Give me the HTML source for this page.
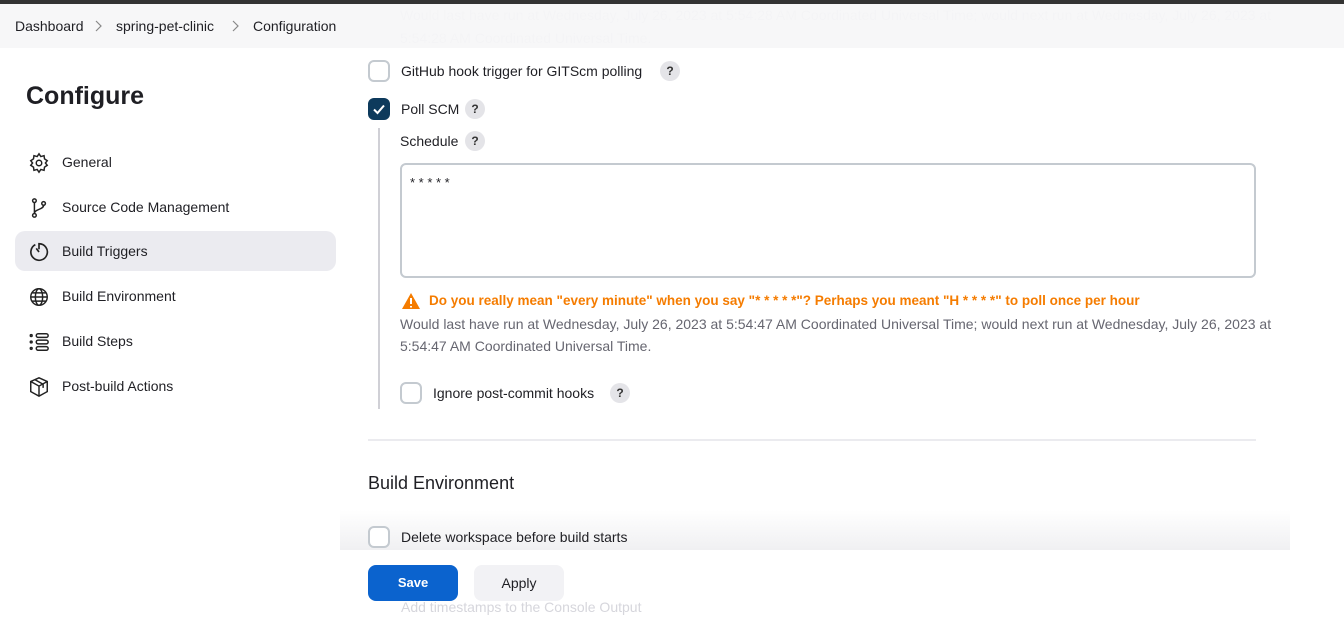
<!DOCTYPE html>
<html><head><meta charset="utf-8"><style>
*{box-sizing:border-box;margin:0;padding:0}
body{width:1344px;height:612px;overflow:hidden;background:#fff;font-family:"Liberation Sans",sans-serif;color:#1f1f24;font-size:14px;position:relative}
.abs{position:absolute}
.topbar{left:0;top:0;width:1344px;height:4px;background:#333}
.crumb{left:0;top:4px;width:1344px;height:44px;background:rgba(246,246,248,0.93);z-index:5}
.crumb span{position:absolute;top:14px;font-size:14px;color:#1f1f24}
.crumb svg{position:absolute;top:16px}
.faded{color:#d6d6dc;font-size:14px;line-height:23px}
.cb{width:22px;height:22px;border:2px solid #c4cad0;border-radius:6px;background:#fff}
.cbon{background:#0d3a5c;border-color:#0d3a5c}
.q{width:20px;height:20px;border-radius:50%;background:#e4e4e8;font-size:12px;font-weight:bold;text-align:center;line-height:20px;color:#333}
.nav{left:15px;width:321px;height:40px;border-radius:10px}
.nav span{position:absolute;left:47px;top:12px;font-size:14px}
.nav svg{position:absolute;left:13px;top:10px}
</style></head><body>
<div class="abs topbar"></div>
<div class="abs faded" style="left:400px;top:4px">Would last have run at Wednesday, July 26, 2023 at 5:54:28 AM Coordinated Universal Time; would next run at Wednesday, July 26, 2023 at<br>5:54:28 AM Coordinated Universal Time.</div>
<div class="abs crumb">
<span style="left:15px">Dashboard</span><svg style="left:94px" width="8" height="12" viewBox="0 0 8 12"><path d="M2 1l5 5-5 5" stroke="#888" stroke-width="1.2" fill="none"/></svg>
<span style="left:116px">spring-pet-clinic</span><svg style="left:231px" width="8" height="12" viewBox="0 0 8 12"><path d="M2 1l5 5-5 5" stroke="#888" stroke-width="1.2" fill="none"/></svg>
<span style="left:253px">Configuration</span>
</div>

<div class="abs" style="left:26px;top:82px;font-size:25px;font-weight:bold">Configure</div>

<div class="abs nav" style="top:142px"><svg width="22" height="22" viewBox="0 0 24 24" fill="none" stroke="#222" stroke-width="1.6"><circle cx="12" cy="12" r="3"/><path d="M12 2l2 3 3.5-1 .5 3.5 3 2-2 2.5 2 2.5-3 2-.5 3.5-3.5-1-2 3-2-3-3.5 1-.5-3.5-3-2 2-2.5-2-2.5 3-2 .5-3.5 3.5 1z"/></svg><span>General</span></div>
<div class="abs nav" style="top:187px"><svg width="22" height="22" viewBox="0 0 24 24" fill="none" stroke="#222" stroke-width="1.6"><circle cx="7" cy="4" r="2"/><circle cx="7" cy="20" r="2"/><circle cx="17" cy="7" r="2"/><path d="M7 6v12M17 9c0 5-10 4-10 9"/></svg><span>Source Code Management</span></div>
<div class="abs nav" style="top:231px;background:#ebebf0"><svg width="22" height="22" viewBox="0 0 24 24" fill="none" stroke="#222" stroke-width="1.8"><path d="M8 4a9 9 0 1 0 4-1v6"/><path d="M12 12l-3-4"/></svg><span>Build Triggers</span></div>
<div class="abs nav" style="top:276px"><svg width="22" height="22" viewBox="0 0 24 24" fill="none" stroke="#222" stroke-width="1.6"><circle cx="12" cy="12" r="9"/><ellipse cx="12" cy="12" rx="4" ry="9"/><path d="M3 12h18M4.5 7.5h15M4.5 16.5h15"/></svg><span>Build Environment</span></div>
<div class="abs nav" style="top:321px"><svg width="22" height="22" viewBox="0 0 24 24" fill="none" stroke="#222" stroke-width="1.6"><rect x="9" y="3" width="13" height="4" rx="2"/><rect x="9" y="10" width="13" height="4" rx="2"/><rect x="9" y="17" width="13" height="4" rx="2"/><circle cx="3.5" cy="5" r="1"/><circle cx="3.5" cy="12" r="1"/><circle cx="3.5" cy="19" r="1"/></svg><span>Build Steps</span></div>
<div class="abs nav" style="top:366px"><svg width="22" height="22" viewBox="0 0 24 24" fill="none" stroke="#222" stroke-width="1.6"><path d="M12 2l9 4v11l-9 5-9-5V6z"/><path d="M3 6l9 5 9-5M12 11v11M7.5 4l9 5v4"/></svg><span>Post-build Actions</span></div>

<div class="abs cb" style="left:368px;top:60px"></div>
<div class="abs" style="left:401px;top:63px">GitHub hook trigger for GITScm polling</div>
<div class="abs q" style="left:660px;top:61px">?</div>

<div class="abs cb cbon" style="left:368px;top:98px"><svg width="18" height="18" viewBox="0 0 18 18" style="position:absolute;left:0;top:0"><path d="M4 9.5l3.5 3.5L14 5.5" stroke="#fff" stroke-width="2" fill="none"/></svg></div>
<div class="abs" style="left:401px;top:101px">Poll SCM</div>
<div class="abs q" style="left:465px;top:99px">?</div>

<div class="abs" style="left:378px;top:128px;width:2px;height:281px;background:#d0d0d6"></div>
<div class="abs" style="left:400px;top:133px">Schedule</div>
<div class="abs q" style="left:465px;top:131px">?</div>
<div class="abs" style="left:400px;top:163px;width:856px;height:115px;border:2px solid #c4cad0;border-radius:6px"></div>
<div class="abs" style="left:410px;top:175px;font-size:13px">* * * * *</div>

<svg class="abs" style="left:401px;top:292px" width="20" height="18" viewBox="0 0 20 18"><path d="M10 1L19 17H1z" fill="#f57c00"/><path d="M10 6v6M10 14v1.5" stroke="#fff" stroke-width="2"/></svg>
<div class="abs" style="left:429px;top:293px;color:#f57c00;font-weight:bold;font-size:13.5px">Do you really mean "every minute" when you say "* * * * *"? Perhaps you meant "H * * * *" to poll once per hour</div>
<div class="abs" style="left:400px;top:313px;color:#666670;font-size:14px;line-height:22px">Would last have run at Wednesday, July 26, 2023 at 5:54:47 AM Coordinated Universal Time; would next run at Wednesday, July 26, 2023 at<br>5:54:47 AM Coordinated Universal Time.</div>

<div class="abs cb" style="left:400px;top:382px"></div>
<div class="abs" style="left:433px;top:385px">Ignore post-commit hooks</div>
<div class="abs q" style="left:610px;top:383px">?</div>

<div class="abs" style="left:368px;top:439px;width:888px;height:2px;background:#ebebef"></div>
<div class="abs" style="left:368px;top:473px;font-size:18px">Build Environment</div>

<div class="abs" style="left:340px;top:510px;width:950px;height:40px;background:linear-gradient(#fff,#f0f0f2)"></div>
<div class="abs cb" style="left:368px;top:526px"></div>
<div class="abs" style="left:401px;top:529px">Delete workspace before build starts</div>
<div class="abs" style="left:340px;top:550px;width:1004px;height:62px;background:rgba(255,255,255,0.95)"></div>
<div class="abs faded" style="left:401px;top:596px">Add timestamps to the Console Output</div>
<div class="abs" style="left:368px;top:565px;width:90px;height:36px;border-radius:8px;background:#0b63ce;color:#fff;font-weight:bold;font-size:13px;text-align:center;line-height:36px">Save</div>
<div class="abs" style="left:474px;top:565px;width:90px;height:36px;border-radius:8px;background:#f2f2f5;font-size:14px;text-align:center;line-height:36px">Apply</div>
</body></html>
